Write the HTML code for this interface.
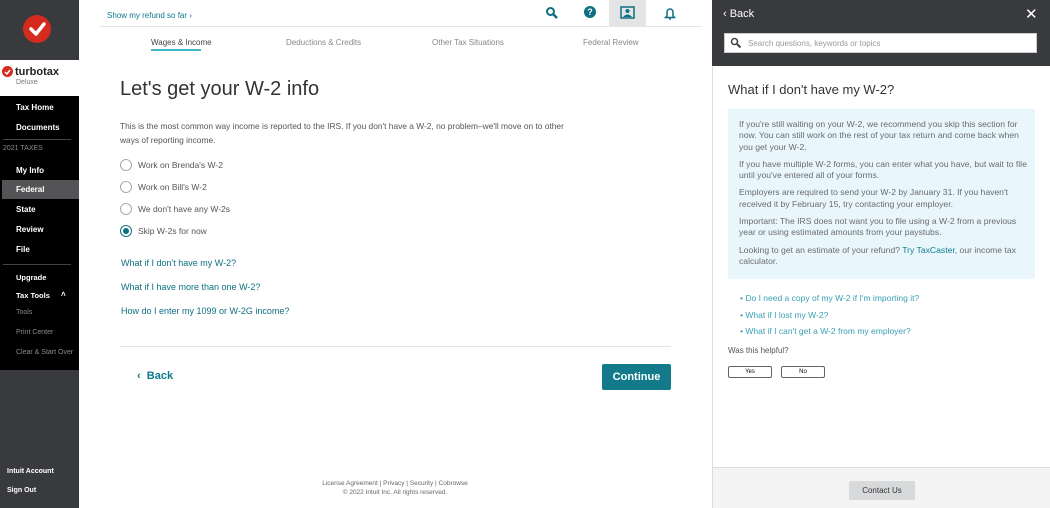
<!DOCTYPE html>
<html><head><meta charset="utf-8"><style>
*{margin:0;padding:0;box-sizing:border-box}
body{width:1050px;height:508px;overflow:hidden;font-family:"Liberation Sans",sans-serif;background:#fff;position:relative}
.a{position:absolute}
.side{left:0;top:0;width:79px;height:508px;background:#393a3d}
.nav{left:0;top:96px;width:79px;height:274px;background:#000}
.nav div{position:absolute;color:#fff;font-size:8px;font-weight:bold;left:16px}
.nav .g{color:#8a8a8a;font-weight:normal}
.teal{color:#0d7a8f}
.radio{position:absolute;left:120px;width:12px;height:12px;border:1px solid #aaa;border-radius:50%}
.rl{position:absolute;left:138px;font-size:8.5px;color:#555}
.lk{position:absolute;left:121px;font-size:9px;color:#0d6f82}
.rp{left:712px;top:0;width:338px;height:508px;border-left:1px solid #ddd}
.box p{margin-bottom:6px}
</style></head><body>
<div class="a side"></div>
<div class="a" style="left:23px;top:15px;width:28px;height:28px;border-radius:50%;background:#d52b1e"></div>
<svg class="a" style="left:23px;top:15px" width="28" height="28"><path d="M8 14l5 5 8-10" stroke="#fff" stroke-width="3.5" fill="none" stroke-linecap="round" stroke-linejoin="round"/></svg>
<div class="a" style="left:0;top:60px;width:79px;height:36px;background:#fff"></div>
<div class="a" style="left:2px;top:66px;width:11px;height:11px;border-radius:50%;background:#d52b1e"></div>
<svg class="a" style="left:2px;top:66px" width="11" height="11"><path d="M3 6l2 2 3-4" stroke="#fff" stroke-width="1.5" fill="none"/></svg>
<div class="a" style="left:15px;top:66px;font-size:11px;font-weight:bold;color:#222">turbotax</div>
<div class="a" style="left:16px;top:79px;font-size:7px;color:#777">Deluxe</div>
<div class="a nav">
<div style="top:7px">Tax Home</div>
<div style="top:27px">Documents</div>
<div style="left:3px;top:43px;width:68px;border-top:1px solid #444"></div>
<div class="g" style="left:3px;top:49px;font-size:7px">2021 TAXES</div>
<div style="top:70px">My Info</div>
<div style="left:2px;top:84px;width:77px;height:19px;background:#545457"></div>
<div style="top:89px">Federal</div>
<div style="top:109px">State</div>
<div style="top:129px">Review</div>
<div style="top:149px">File</div>
<div style="left:3px;top:168px;width:68px;border-top:1px solid #444"></div>
<div style="top:177px;font-size:7.5px">Upgrade</div>
<div style="top:195px;font-size:7.5px">Tax Tools</div>
<div style="left:61px;top:194px;font-size:8px">&#708;</div>
<div class="g" style="top:213px;font-size:7px">Tools</div>
<div class="g" style="top:233px;font-size:7px">Print Center</div>
<div class="g" style="top:253px;font-size:7px">Clear &amp; Start Over</div>
</div>
<div class="a" style="left:7px;top:468px;font-size:7px;color:#fff;font-weight:bold">Intuit Account</div>
<div class="a" style="left:7px;top:487px;font-size:7px;color:#fff;font-weight:bold">Sign Out</div>

<div class="a teal" style="left:107px;top:11px;font-size:8px">Show my refund so far &#x203A;</div>
<svg class="a" style="left:545px;top:6px" width="14" height="14"><circle cx="5.5" cy="5.5" r="3.5" stroke="#0d6f82" stroke-width="2" fill="none"/><path d="M8 8l4 4" stroke="#0d6f82" stroke-width="2.5"/></svg>
<div class="a" style="left:584px;top:6px;width:12px;height:12px;border-radius:50%;background:#0d6f82;color:#fff;font-size:9px;font-weight:bold;text-align:center;line-height:12px">?</div>
<div class="a" style="left:609px;top:0;width:37px;height:26px;background:#e3e4e5"></div>
<svg class="a" style="left:620px;top:6px" width="15" height="13"><rect x="1" y="1" width="13" height="11" stroke="#0d6f82" stroke-width="1.5" fill="none"/><circle cx="7.5" cy="5" r="2" fill="#0d6f82"/><path d="M3 11q4.5-5 9 0" fill="#0d6f82"/></svg>
<svg class="a" style="left:664px;top:6px" width="12" height="14"><path d="M3 10V6a3 3 0 016 0v4l1.5 1.5h-9z" stroke="#0d6f82" stroke-width="1.5" fill="none"/><path d="M5 13h2" stroke="#0d6f82" stroke-width="1.5"/></svg>
<div class="a" style="left:100px;top:26px;width:602px;border-top:1px solid #e5e5e5"></div>
<div class="a" style="left:151px;top:38px;font-size:8px;color:#444">Wages &amp; Income</div>
<div class="a" style="left:151px;top:49px;width:50px;height:2px;background:#3fb6c9"></div>
<div class="a" style="left:286px;top:38px;font-size:8px;color:#888">Deductions &amp; Credits</div>
<div class="a" style="left:432px;top:38px;font-size:8px;color:#888">Other Tax Situations</div>
<div class="a" style="left:583px;top:38px;font-size:8px;color:#888">Federal Review</div>
<div class="a" style="left:120px;top:78px;font-size:20px;color:#333">Let's get your W-2 info</div>
<div class="a" style="left:120px;top:119px;width:455px;font-size:8.4px;color:#555;line-height:14px">This is the most common way income is reported to the IRS. If you don't have a W-2, no problem–we'll move on to other ways of reporting income.</div>
<div class="radio" style="top:159px"></div><div class="rl" style="top:160px">Work on Brenda's W-2</div>
<div class="radio" style="top:181px"></div><div class="rl" style="top:182px">Work on Bill's W-2</div>
<div class="radio" style="top:203px"></div><div class="rl" style="top:204px">We don't have any W-2s</div>
<div class="radio" style="top:225px;border-color:#0d6f82"></div><div class="a" style="left:123px;top:228px;width:6px;height:6px;border-radius:50%;background:#0d6f82"></div><div class="rl" style="top:226px">Skip W-2s for now</div>
<div class="lk" style="top:258px">What if I don't have my W-2?</div>
<div class="lk" style="top:282px">What if I have more than one W-2?</div>
<div class="lk" style="top:306px">How do I enter my 1099 or W-2G income?</div>
<div class="a" style="left:120px;top:346px;width:551px;border-top:1px solid #e5e5e5"></div>
<div class="a teal" style="left:137px;top:370px;font-size:11px;font-weight:bold">&#x2039;&nbsp; Back</div>
<div class="a" style="left:602px;top:364px;width:69px;height:26px;background:#127a8a;border-radius:2px;color:#fff;font-size:11px;font-weight:bold;text-align:center;line-height:26px">Continue</div>
<div class="a" style="left:300px;top:479px;width:190px;text-align:center;font-size:6.5px;color:#666;line-height:9px">License Agreement | Privacy | Security | Cobrowse<br>© 2022 Intuit Inc. All rights reserved.</div>

<div class="a rp"></div>
<div class="a" style="left:712px;top:0;width:338px;height:66px;background:#393a3d"></div>
<div class="a" style="left:723px;top:8px;font-size:11px;color:#fff">&#x2039; Back</div>
<div class="a" style="left:1025px;top:5px;font-size:15px;color:#fff">&#x2715;</div>
<div class="a" style="left:724px;top:33px;width:313px;height:20px;background:#fff;border:1px solid #ccc"></div>
<svg class="a" style="left:730px;top:37px" width="12" height="12"><circle cx="4.5" cy="4.5" r="3" stroke="#444" stroke-width="1.5" fill="none"/><path d="M7 7l3.5 3.5" stroke="#444" stroke-width="2"/></svg>
<div class="a" style="left:748px;top:39px;font-size:8px;color:#999">Search questions, keywords or topics</div>
<div class="a" style="left:728px;top:82px;font-size:13px;color:#333">What if I don't have my W-2?</div>
<div class="a box" style="left:728px;top:109px;width:307px;height:170px;background:#e9f7fc;padding:10px 8px 0 11px;font-size:8.6px;color:#6b6b6b;line-height:11.3px">
<p>If you're still waiting on your W-2, we recommend you skip this section for now. You can still work on the rest of your tax return and come back when you get your W-2.</p>
<p>If you have multiple W-2 forms, you can enter what you have, but wait to file until you've entered all of your forms.</p>
<p>Employers are required to send your W-2 by January 31. If you haven't received it by February 15, try contacting your employer.</p>
<p>Important: The IRS does not want you to file using a W-2 from a previous year or using estimated amounts from your paystubs.</p>
<p>Looking to get an estimate of your refund? <span class="teal">Try TaxCaster</span>, our income tax calculator.</p>
</div>
<div class="a" style="left:740px;top:290px;font-size:8.5px;color:#3a9fb5;line-height:16.5px">• Do I need a copy of my W-2 if I'm importing it?<br>• What if I lost my W-2?<br>• What if I can't get a W-2 from my employer?</div>
<div class="a" style="left:728px;top:346px;font-size:8px;color:#555">Was this helpful?</div>
<div class="a" style="left:728px;top:366px;width:44px;height:12px;border:1px solid #666;border-radius:2px;font-size:6px;text-align:center;line-height:10px">Yes</div>
<div class="a" style="left:781px;top:366px;width:44px;height:12px;border:1px solid #666;border-radius:2px;font-size:6px;text-align:center;line-height:10px">No</div>
<div class="a" style="left:713px;top:467px;width:337px;height:41px;background:#f4f4f5;border-top:1px solid #ddd"></div>
<div class="a" style="left:849px;top:481px;width:66px;height:19px;background:#d8d9db;border-radius:2px;font-size:8px;color:#333;text-align:center;line-height:19px">Contact Us</div>
</body></html>
